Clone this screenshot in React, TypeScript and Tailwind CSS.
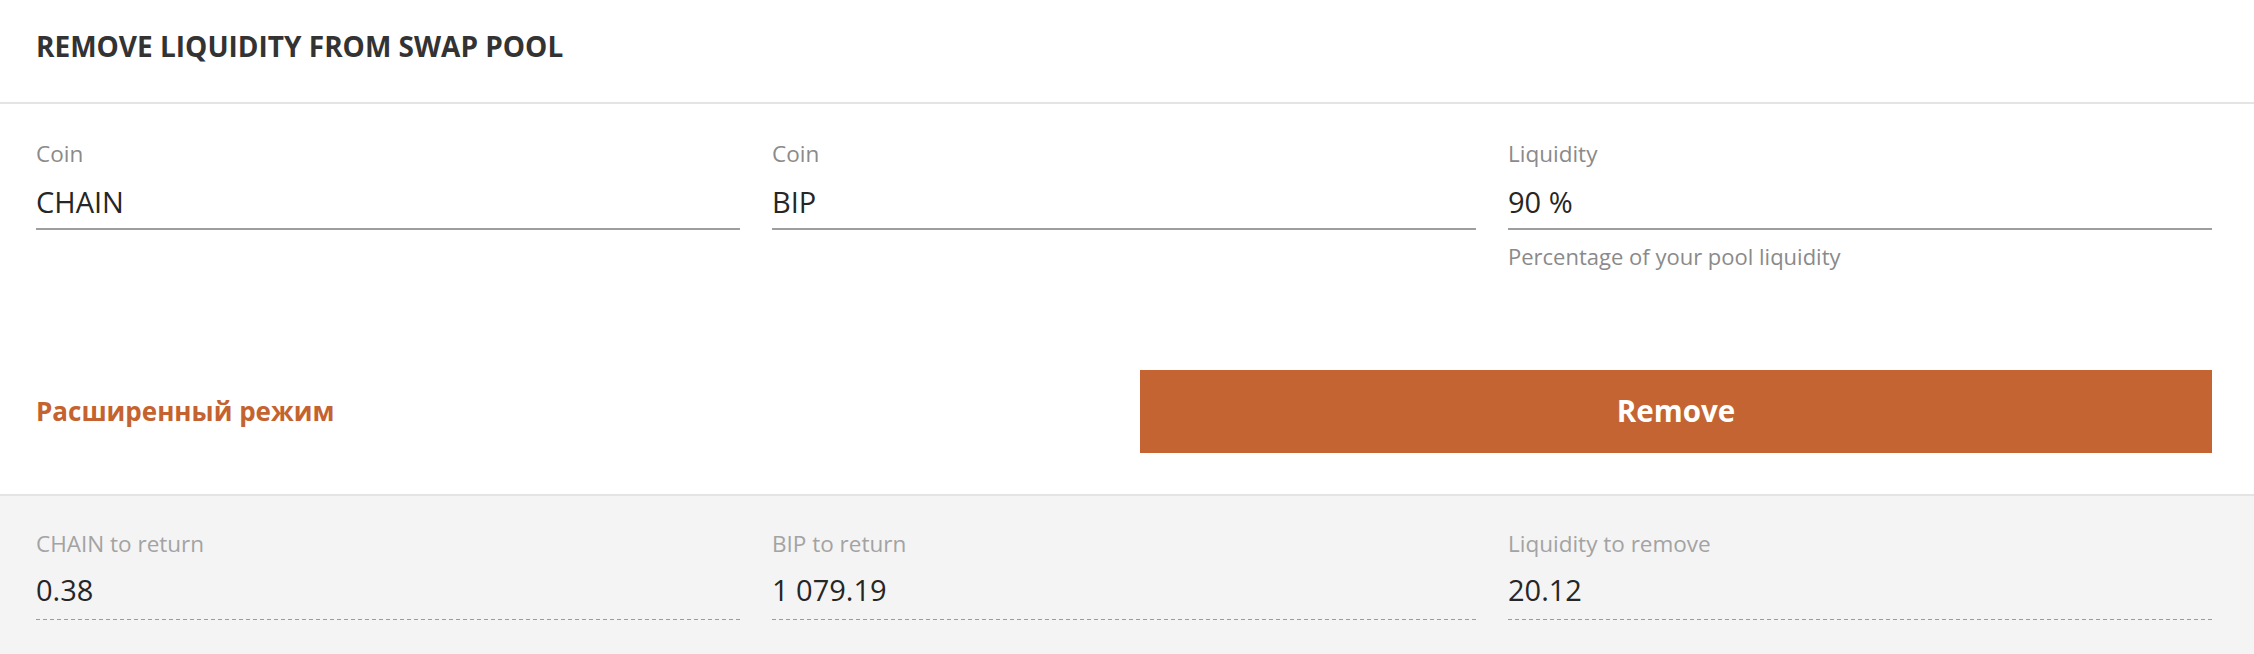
const FONT = "font-['Open_Sans',sans-serif]";

const inputs = [
  { label: "Coin", value: "CHAIN" },
  { label: "Coin", value: "BIP" },
  { label: "Liquidity", value: "90 %", hint: "Percentage of your pool liquidity" },
];

const results = [
  { label: "CHAIN to return", value: "0.38" },
  { label: "BIP to return", value: "1 079.19" },
  { label: "Liquidity to remove", value: "20.12" },
];

function Field({ label, value, hint }: { label: string; value: string; hint?: string }) {
  return (
    <div className="flex flex-col">
      <div className="text-[22.5px] leading-none text-[#8a8a8a]">{label}</div>
      <div className="mt-[21px] border-b-2 border-[#9e9e9e] pb-[12px] text-[29px] leading-none text-[#262626]">
        {value}
      </div>
      {hint && (
        <div className="mt-[15px] text-[22px] leading-none text-[#8a8a8a]">{hint}</div>
      )}
    </div>
  );
}

function Result({ label, value }: { label: string; value: string }) {
  return (
    <div className="flex flex-col">
      <div className="text-[22.5px] leading-none text-[#a3a3a3]">{label}</div>
      <div className="mt-[20px] pb-[15px] text-[29px] leading-none text-[#262626]">{value}</div>
      {/* dashed rule */}
      <div className="h-px bg-[linear-gradient(to_right,#9c9c9c_57%,transparent_0)] bg-[length:7px_1px] bg-repeat-x" />
    </div>
  );
}

export default function App() {
  return (
    <div className={`${FONT} min-h-screen w-full bg-white`}>
      <div className="h-[104px] border-b-2 border-[#e4e4e4] pl-[36px] pt-[32px]">
        <h1 className="text-[28px] font-bold leading-none text-[#333333]">
          REMOVE LIQUIDITY FROM SWAP POOL
        </h1>
      </div>

      <div className="border-b-2 border-[#e4e4e4] pb-[41px] pl-[36px] pr-[42px] pt-[39px]">
        <div className="grid grid-cols-3 gap-x-8">
          {inputs.map((f, i) => (
            <Field key={i} label={f.label} value={f.value} hint={f.hint} />
          ))}
        </div>
        <div className="mt-[103px] grid grid-cols-2 items-center gap-x-8">
          <button className="text-left text-[26px] font-bold leading-none text-[#c4632f]">
            Расширенный режим
          </button>
          <button className="h-[83px] bg-[#c46433] text-[29.5px] font-bold text-white">
            Remove
          </button>
        </div>
      </div>

      <div className="bg-[#f4f4f4] pb-[40px] pl-[36px] pr-[42px] pt-[37px]">
        <div className="grid grid-cols-3 gap-x-8">
          {results.map((r, i) => (
            <Result key={i} label={r.label} value={r.value} />
          ))}
        </div>
      </div>
    </div>
  );
}
